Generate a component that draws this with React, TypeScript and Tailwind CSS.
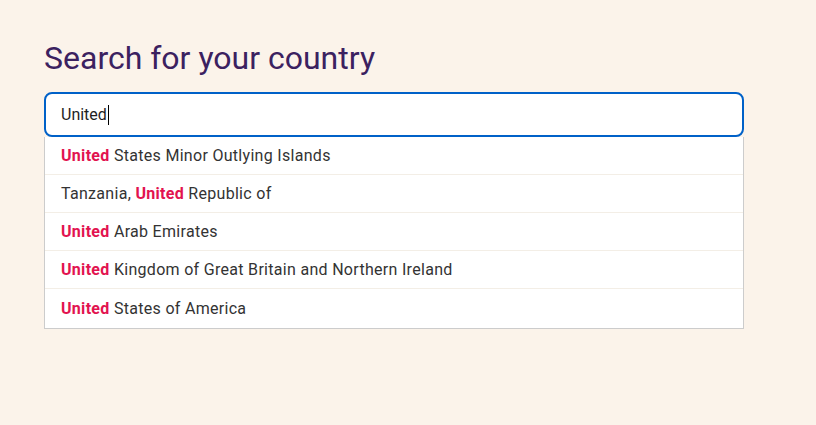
const results: { before: string; match: string; after: string }[] = [
  { before: "", match: "United", after: " States Minor Outlying Islands" },
  { before: "Tanzania, ", match: "United", after: " Republic of" },
  { before: "", match: "United", after: " Arab Emirates" },
  { before: "", match: "United", after: " Kingdom of Great Britain and Northern Ireland" },
  { before: "", match: "United", after: " States of America" },
];

export default function App() {
  return (
    <main
      className="min-h-[425px] bg-[#fbf3ea] px-[44px] pt-[38px]"
      style={{ fontFamily: "Roboto, 'Noto Sans', sans-serif" }}
    >
      <h1 className="text-[32px] leading-[40px] text-[#3b2160]">Search for your country</h1>
      <div className="mt-[14px] w-[700px]">
        <div className="flex h-[45px] items-center rounded-[8px] border-2 border-[#0061c8] bg-white px-[15px] text-[16px] text-[#1f1f1f]">
          <span>United</span>
          <span className="ml-px h-[20px] w-px bg-black" />
        </div>
        <ul className="border border-t-0 border-[#cccccc] bg-white">
          {results.map((r, i) => (
            <li
              key={i}
              className="flex h-[38px] items-center border-b border-[#f3eee6] px-[16px] text-[16px] tracking-[0.3px] text-[#333333] last:h-[39px] last:border-b-0"
            >
              <span className="whitespace-pre">
                {r.before}
                <strong className="font-bold text-[#e2134f]">{r.match}</strong>
                {r.after}
              </span>
            </li>
          ))}
        </ul>
      </div>
    </main>
  );
}
